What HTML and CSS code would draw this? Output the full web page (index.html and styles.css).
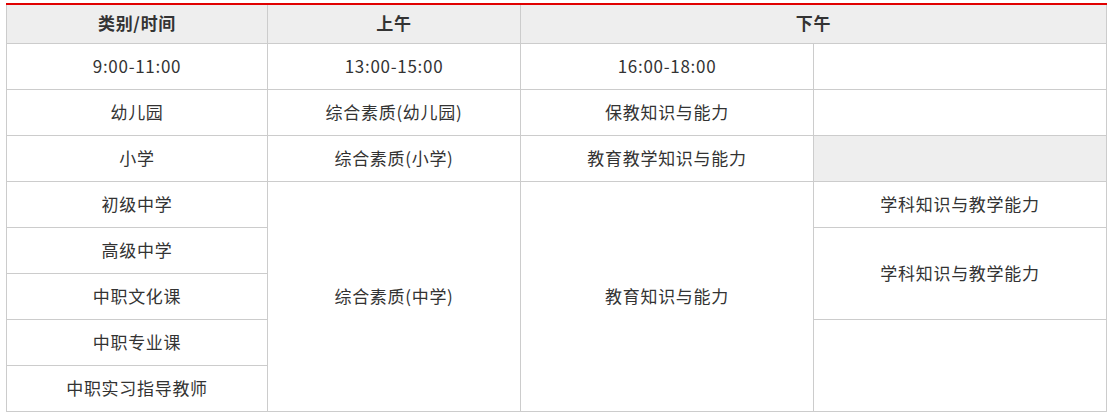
FILE: index.html
```html
<!DOCTYPE html>
<html lang="zh-CN">
<head>
<meta charset="utf-8">
<link rel="stylesheet" href="styles.css">
</head>
<body>
<table class="schedule">
  <colgroup>
    <col class="c1"><col class="c2"><col class="c3"><col class="c4">
  </colgroup>
  <thead>
    <tr>
      <th>类别/时间</th>
      <th>上午</th>
      <th colspan="2">下午</th>
    </tr>
  </thead>
  <tbody>
    <tr><td>9:00-11:00</td><td>13:00-15:00</td><td>16:00-18:00</td><td></td></tr>
    <tr><td>幼儿园</td><td>综合素质(幼儿园)</td><td>保教知识与能力</td><td></td></tr>
    <tr><td>小学</td><td>综合素质(小学)</td><td>教育教学知识与能力</td><td class="shade"></td></tr>
    <tr><td>初级中学</td><td rowspan="5">综合素质(中学)</td><td rowspan="5">教育知识与能力</td><td>学科知识与教学能力</td></tr>
    <tr><td>高级中学</td><td rowspan="2">学科知识与教学能力</td></tr>
    <tr><td>中职文化课</td></tr>
    <tr><td>中职专业课</td><td rowspan="2"></td></tr>
    <tr><td>中职实习指导教师</td></tr>
  </tbody>
</table>
</body>
</html>
```
FILE: styles.css
```css
html, body {
  margin: 0;
  padding: 0;
  background: #fff;
}
body {
  padding: 3px 0 0 6px;
  font-family: "Microsoft YaHei", "Noto Sans CJK SC", "Noto Sans", sans-serif;
  color: #333;
}
.schedule {
  border-collapse: collapse;
  width: 1101px;
  table-layout: fixed;
  font-size: 17px;
  letter-spacing: 0.7px;
}
.c1 { width: 261px; }
.c2 { width: 253px; }
.c3 { width: 293px; }
.c4 { width: 293px; }
.schedule th,
.schedule td {
  border: 1px solid #cccccc;
  text-align: center;
  vertical-align: middle;
  padding: 0 0 2px;
  line-height: 24px;
}
.schedule thead th {
  border-top: 2px solid #e00000;
  background: #eeeeee;
  font-weight: bold;
  height: 36px;
}
.schedule tbody td {
  height: 43px;
}
.schedule td.shade {
  background: #eeeeee;
}
```
